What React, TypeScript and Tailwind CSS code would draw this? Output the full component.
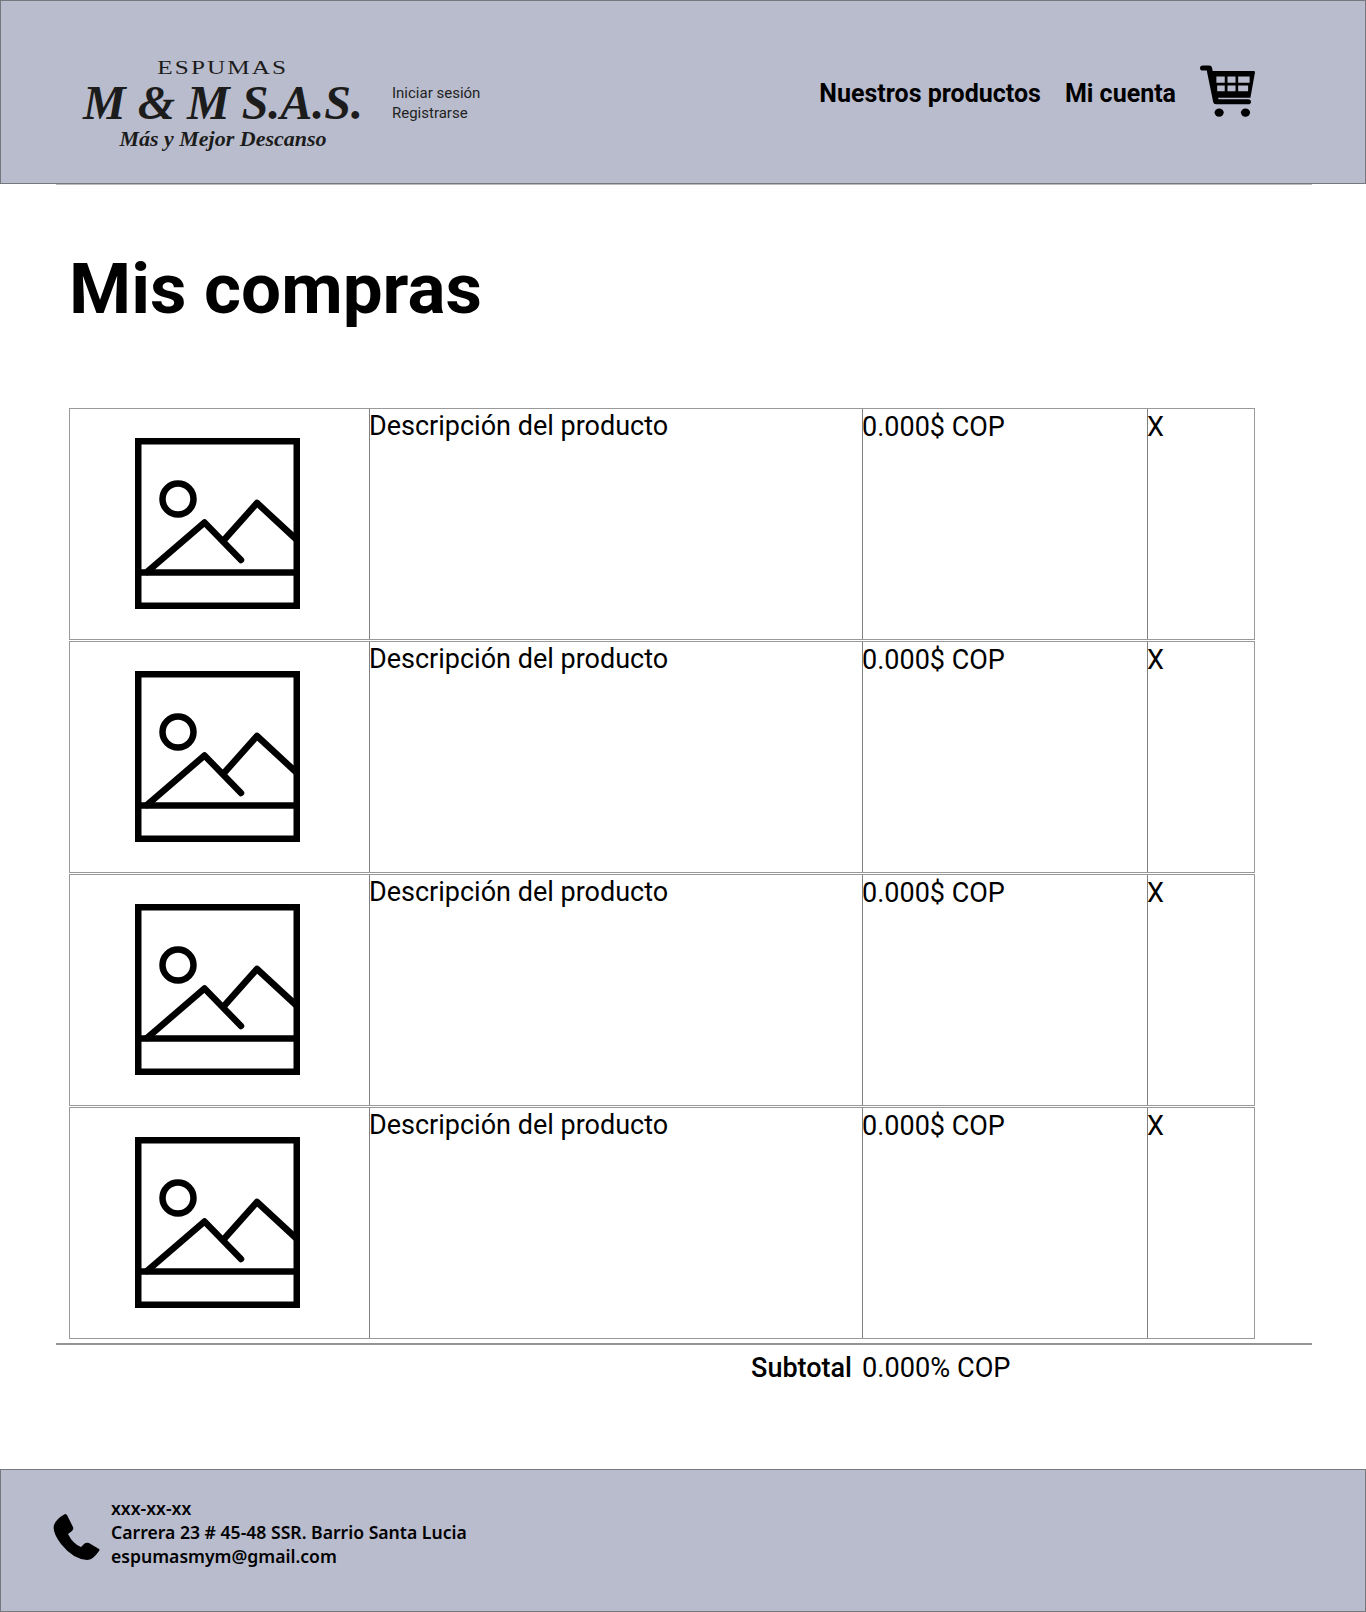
const rows = [0, 1, 2, 3];

function ImageIcon() {
  return (
    <svg width="165" height="171" viewBox="0 0 165 171" fill="none" stroke="#000" strokeWidth="6.5">
      <rect x="3.25" y="3.25" width="158.5" height="164.5" />
      <path d="M3 134.5H162" />
      <circle cx="43" cy="61" r="15.5" />
      <path d="M12 134L69.5 84.5L106 122" strokeLinecap="round" strokeLinejoin="round" />
      <path d="M89 102L122 65L162 102" strokeLinejoin="round" />
    </svg>
  );
}

function CartIcon() {
  return (
    <svg width="55" height="52" viewBox="0 0 48 51" preserveAspectRatio="none" className="mb-[2px] shrink-0">
      <path
        fillRule="evenodd"
        d="M9 6H47Q48 6 48 7L44 32H12ZM14.3 11.3V17.3H21.6V11.3ZM24 11.3V17.3H31V11.3ZM33.3 11.3V17.3H43.3V11.3ZM15 20V25.7H21.6V20ZM24 20V25.7H31V20ZM33.3 20V25.7H42V20Z"
      />
      <path d="M2.5 3H8L14 36H42" fill="none" stroke="#000" strokeWidth="5" strokeLinecap="round" strokeLinejoin="round" />
      <circle cx="16.7" cy="46.7" r="4" />
      <circle cx="39.7" cy="46.7" r="4" />
    </svg>
  );
}

function PhoneIcon() {
  return (
    <svg width="47" height="47" viewBox="0 0 47 47" className="shrink-0">
      <path d="M14 1L20 13Q21 15 19 17L15 20Q20 30 28 33L31 30Q33 28 36 29L46 35Q47 36 46 37Q40 46 34 46Q20 45 8 30Q-1 18 1 11Q3 5 12 0Q13 0 14 1Z" />
    </svg>
  );
}

export default function App() {
  return (
    <div className="flex h-[1612px] w-[1366px] flex-col bg-white font-['Roboto',sans-serif] text-black">
      <header className="flex h-[184px] shrink-0 items-center border border-[#77787d] bg-[#b9bccd]">
        <div className="ml-[82px] flex w-[280px] flex-col items-center pt-[22px] font-['Liberation_Serif',serif] text-[#1c1c1c]">
          <span className="scale-x-[1.4] pt-[2px] text-[18px] leading-[20px] tracking-[1.5px]">ESPUMAS</span>
          <span className="whitespace-nowrap text-[48px] leading-[50px] font-bold italic">M & M S.A.S.</span>
          <span className="text-[22px] leading-[22px] font-bold italic">Más y Mejor Descanso</span>
        </div>
        <div className="ml-[29px] flex flex-col pt-[22px] text-[15px] leading-[20px] text-[#222]">
          <span>Iniciar sesión</span>
          <span>Registrarse</span>
        </div>
        <nav className="ml-auto mr-[110px] flex items-center gap-6 text-[25px] font-bold">
          <span className="pt-[4px]">Nuestros productos</span>
          <span className="pt-[4px]">Mi cuenta</span>
          <CartIcon />
        </nav>
      </header>

      <div className="ml-[56px] mr-[54px] h-px shrink-0 bg-[#bbb]" />

      <h1 className="ml-[69px] mt-[68px] text-[71px] leading-[72px] font-bold">Mis compras</h1>

      <div className="ml-[69px] mt-[83px] flex w-[1186px] flex-col gap-px">
        {rows.map((r) => (
          <div key={r} className="flex h-[232px] border border-[#999999] text-[27px] leading-[34px]">
            <div className="flex w-[299px] shrink-0 justify-center pt-[29px] pr-[4px]">
              <ImageIcon />
            </div>
            <div className="w-[493px] shrink-0 border-l border-[#808080]">
              <span className="-ml-px block">Descripción del producto</span>
            </div>
            <div className="w-[285px] shrink-0 border-l border-[#808080] pt-px">
              <span className="-ml-px block">0.000$ COP</span>
            </div>
            <div className="flex-1 border-l border-[#808080] pt-px">
              <span className="-ml-px block">X</span>
            </div>
          </div>
        ))}
      </div>

      <div className="ml-[56px] mr-[54px] mt-[4px] h-[2px] shrink-0 bg-[#949494]" />

      <div className="flex items-center pt-[6px] text-[27px] leading-[34px]">
        <span className="w-[852px] text-right font-medium">Subtotal</span>
        <span className="ml-[10px] text-[27.2px]">0.000% COP</span>
      </div>

      <footer className="mt-auto flex h-[143px] shrink-0 items-center border border-[#77787d] bg-[#b9bccd] pl-[52px]">
        <div className="pb-[6px]">
          <PhoneIcon />
        </div>
        <div className="ml-[11px] flex flex-col pb-[18px] font-['Noto_Sans',sans-serif] text-[17.6px] leading-[24px] font-semibold">
          <span>xxx-xx-xx</span>
          <span>Carrera 23 # 45-48 SSR. Barrio Santa Lucia</span>
          <span>espumasmym@gmail.com</span>
        </div>
      </footer>
    </div>
  );
}
